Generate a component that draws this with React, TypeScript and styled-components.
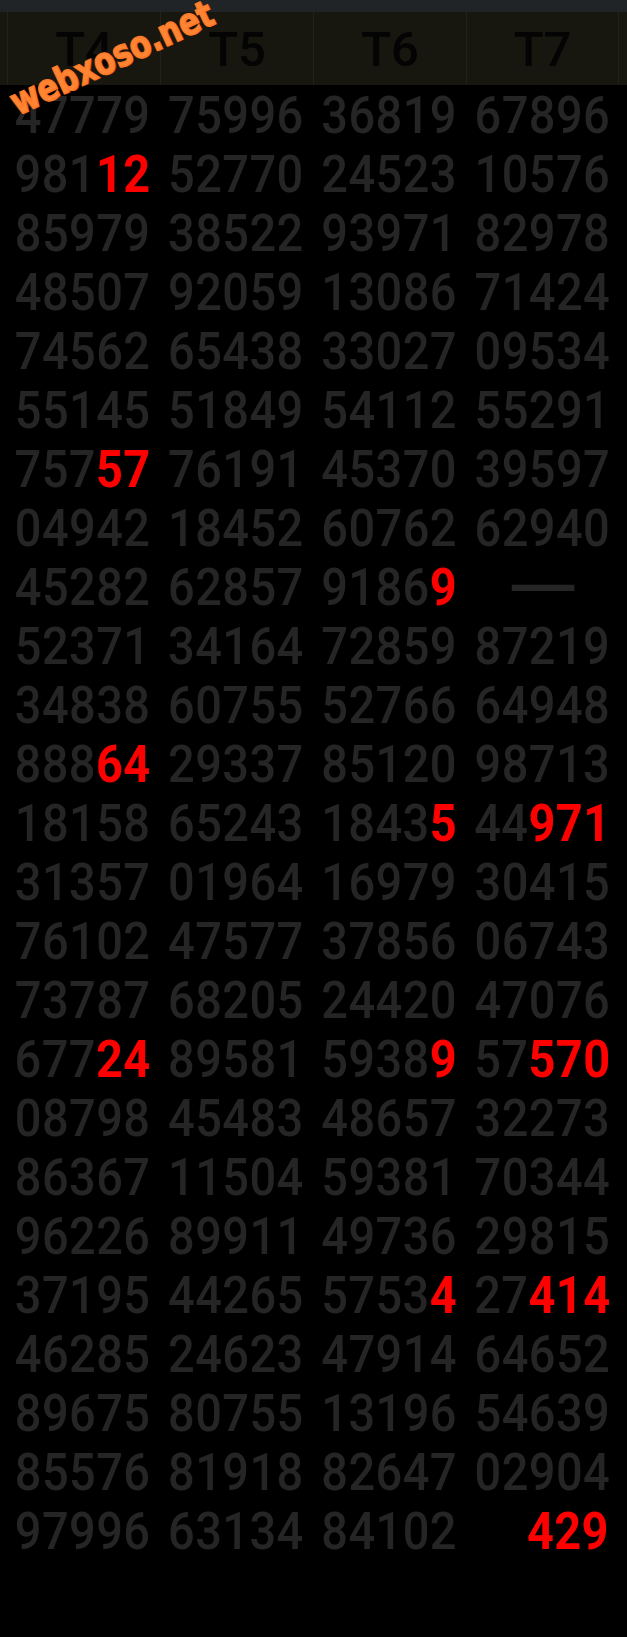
import React from "react";
import styled, { createGlobalStyle } from "styled-components";

const GlobalStyle = createGlobalStyle`
  html, body { margin: 0; padding: 0; background: #000; }
  body { font-family: Roboto, "Liberation Sans", sans-serif; }
`;

type Part = { t: string; hot?: boolean };
type CellData = { parts: Part[]; align?: "center" | "right"; dash?: boolean };

const c = (s: string, hotFrom?: number): CellData =>
  hotFrom === undefined
    ? { parts: [{ t: s }] }
    : { parts: [{ t: s.slice(0, hotFrom) }, { t: s.slice(hotFrom), hot: true }] };

const rows: CellData[][] = [
  [c("47779"), c("75996"), c("36819"), c("67896")],
  [c("98112", 3), c("52770"), c("24523"), c("10576")],
  [c("85979"), c("38522"), c("93971"), c("82978")],
  [c("48507"), c("92059"), c("13086"), c("71424")],
  [c("74562"), c("65438"), c("33027"), c("09534")],
  [c("55145"), c("51849"), c("54112"), c("55291")],
  [c("75757", 3), c("76191"), c("45370"), c("39597")],
  [c("04942"), c("18452"), c("60762"), c("62940")],
  [c("45282"), c("62857"), c("91869", 4), { parts: [{ t: "—" }], dash: true }],
  [c("52371"), c("34164"), c("72859"), c("87219")],
  [c("34838"), c("60755"), c("52766"), c("64948")],
  [c("88864", 3), c("29337"), c("85120"), c("98713")],
  [c("18158"), c("65243"), c("18435", 4), c("44971", 2)],
  [c("31357"), c("01964"), c("16979"), c("30415")],
  [c("76102"), c("47577"), c("37856"), c("06743")],
  [c("73787"), c("68205"), c("24420"), c("47076")],
  [c("67724", 3), c("89581"), c("59389", 4), c("57570", 2)],
  [c("08798"), c("45483"), c("48657"), c("32273")],
  [c("86367"), c("11504"), c("59381"), c("70344")],
  [c("96226"), c("89911"), c("49736"), c("29815")],
  [c("37195"), c("44265"), c("57534", 4), c("27414", 2)],
  [c("46285"), c("24623"), c("47914"), c("64652")],
  [c("89675"), c("80755"), c("13196"), c("54639")],
  [c("85576"), c("81918"), c("82647"), c("02904")],
  [c("97996"), c("63134"), c("84102"), { parts: [{ t: "429", hot: true }], align: "right" }],
];

const Page = styled.div`
  position: relative;
  min-height: 1637px;
  background: #000;
  overflow: hidden;
`;

const TopBar = styled.div`
  height: 12px;
  background: #212427;
`;

const HeaderRow = styled.div`
  display: grid;
  grid-template-columns: repeat(4, 1fr);
  height: 73px;
  padding: 0 8px 0 7px;
  background: #17160f;
`;

const HeaderCell = styled.div`
  display: flex;
  align-items: center;
  justify-content: center;
  border-left: 1px solid #22211a;
  &:last-child { border-right: 1px solid #22211a; }
  font-family: Roboto, "Liberation Sans", sans-serif;
  font-weight: 500;
  font-size: 49px;
  color: #040404;
  padding-top: 2px;
`;

const Body = styled.div`
  padding: 0 8px 0 6px;
`;

const Row = styled.div`
  display: grid;
  grid-template-columns: repeat(4, 1fr);
  grid-template-rows: 59px;
  height: 59px;
`;

const Cell = styled.div<{ $align?: "center" | "right" }>`
  display: flex;
  align-items: center;
  justify-content: ${(p) => (p.$align === "right" ? "flex-end" : "center")};
  padding-right: ${(p) => (p.$align === "right" ? "10px" : "0")};
  min-height: 0;
`;

const Num = styled.span`
  display: inline-block;
  font-family: Roboto, "Liberation Sans", sans-serif;
  font-weight: 500;
  font-size: 47px;
  letter-spacing: 0.4px;
  line-height: 1;
  color: #252525;
  transform: scaleY(1.11);
  white-space: nowrap;
`;

const Hot = styled.span`
  color: #ff0000;
  font-weight: 700;
`;

const Dash = styled.span`
  display: inline-block;
  font-family: Roboto, "Liberation Sans", sans-serif;
  font-size: 60px;
  line-height: 40px;
  height: 40px;
  color: #252525;
  transform: translateY(3px) scale(1.6, 1.4);
`;

const Watermark = styled.div`
  position: absolute;
  left: 4px;
  top: 40px;
  transform: rotate(-25deg) scale(1.02, 1.25);
  transform-origin: center;
  font-family: "DejaVu Sans", Verdana, sans-serif;
  font-weight: 700;
  font-size: 30px;
  color: #ff8535;
  -webkit-text-stroke: 1.2px #ff7a28;
  text-shadow: 1px 1px 0 #7a3206, -1px 0 1px #4a1e00;
  white-space: nowrap;
  pointer-events: none;
`;

export default function App() {
  return (
    <Page>
      <GlobalStyle />
      <TopBar />
      <HeaderRow>
        {["T4", "T5", "T6", "T7"].map((h) => (
          <HeaderCell key={h}>{h}</HeaderCell>
        ))}
      </HeaderRow>
      <Body>
        {rows.map((r, i) => (
          <Row key={i}>
            {r.map((cell, j) => (
              <Cell key={j} $align={cell.align}>
                {cell.dash ? (
                  <Dash>—</Dash>
                ) : (
                  <Num>
                    {cell.parts.map((p, k) =>
                      p.hot ? <Hot key={k}>{p.t}</Hot> : <React.Fragment key={k}>{p.t}</React.Fragment>
                    )}
                  </Num>
                )}
              </Cell>
            ))}
          </Row>
        ))}
      </Body>
      <Watermark>webxoso.net</Watermark>
    </Page>
  );
}
